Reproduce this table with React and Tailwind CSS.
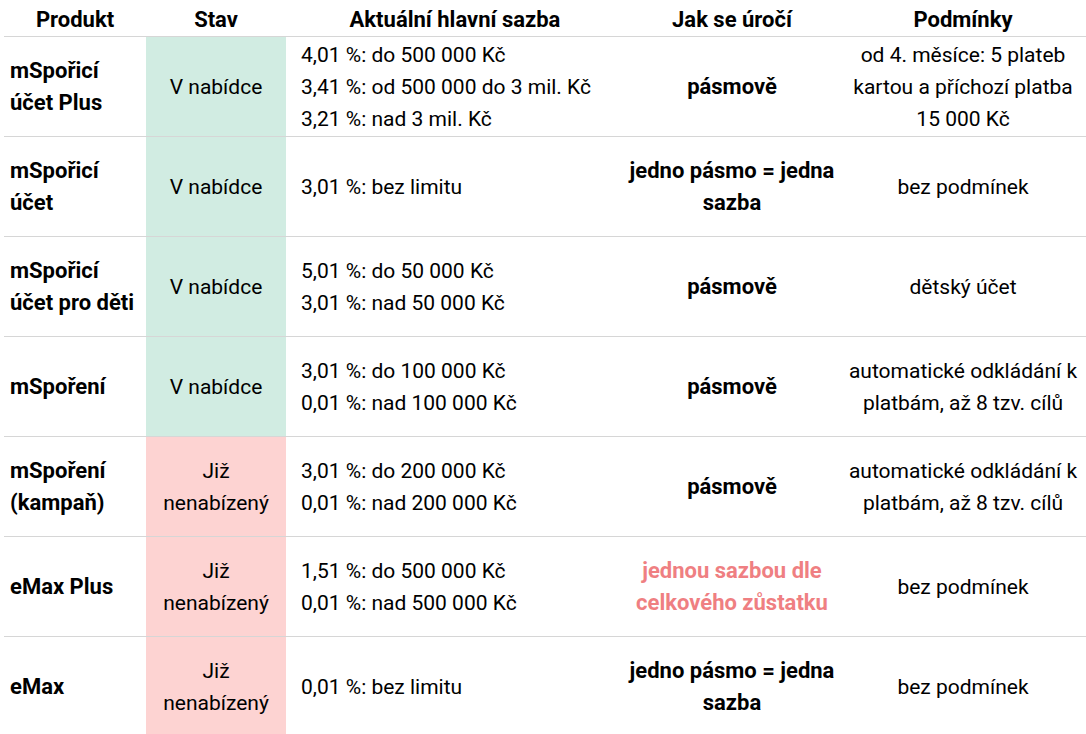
import React from "react";

const rows = [
  {
    name: ["mSpořicí", "účet Plus"],
    active: true,
    rates: ["4,01 %: do 500 000 Kč", "3,41 %: od 500 000 do 3 mil. Kč", "3,21 %: nad 3 mil. Kč"],
    how: ["pásmově"],
    cond: ["od 4. měsíce: 5 plateb", "kartou a příchozí platba", "15 000 Kč"],
  },
  {
    name: ["mSpořicí", "účet"],
    active: true,
    rates: ["3,01 %: bez limitu"],
    how: ["jedno pásmo = jedna", "sazba"],
    cond: ["bez podmínek"],
  },
  {
    name: ["mSpořicí", "účet pro děti"],
    active: true,
    rates: ["5,01 %: do 50 000 Kč", "3,01 %: nad 50 000 Kč"],
    how: ["pásmově"],
    cond: ["dětský účet"],
  },
  {
    name: ["mSpoření"],
    active: true,
    rates: ["3,01 %: do 100 000 Kč", "0,01 %: nad 100 000 Kč"],
    how: ["pásmově"],
    cond: ["automatické odkládání k", "platbám, až 8 tzv. cílů"],
  },
  {
    name: ["mSpoření", "(kampaň)"],
    active: false,
    rates: ["3,01 %: do 200 000 Kč", "0,01 %: nad 200 000 Kč"],
    how: ["pásmově"],
    cond: ["automatické odkládání k", "platbám, až 8 tzv. cílů"],
  },
  {
    name: ["eMax Plus"],
    active: false,
    rates: ["1,51 %: do 500 000 Kč", "0,01 %: nad 500 000 Kč"],
    how: ["jednou sazbou dle", "celkového zůstatku"],
    pink: true,
    cond: ["bez podmínek"],
  },
  {
    name: ["eMax"],
    active: false,
    rates: ["0,01 %: bez limitu"],
    how: ["jedno pásmo = jedna", "sazba"],
    cond: ["bez podmínek"],
  },
];

function Lines({ items }) {
  return (
    <>
      {items.map((t, i) => (
        <div key={i} className="whitespace-nowrap">{t}</div>
      ))}
    </>
  );
}

const head = "h-[37px] pt-[3px] border-b border-[#d6d6d6] flex items-center justify-center font-bold text-[22px]";

export default function App() {
  return (
    <div
      className="w-[1086px] h-[734px] overflow-hidden bg-white text-black text-[21px] leading-[32px]"
      style={{ fontFamily: "Roboto, 'Liberation Sans', sans-serif" }}
    >
      <div className="ml-[4px] grid grid-cols-[142px_140px_338px_216px_246px]">
        <div className={head}>Produkt</div>
        <div className={head}>Stav</div>
        <div className={head}>Aktuální hlavní sazba</div>
        <div className={head}>Jak se úročí</div>
        <div className={head}>Podmínky</div>

        {rows.map((r, i) => (
          <React.Fragment key={i}>
            <div className="h-[100px] border-b border-[#d6d6d6] flex flex-col justify-center pl-[6px] font-bold text-[22px]">
              <Lines items={r.name} />
            </div>
            <div
              className={
                "h-[100px] border-b border-[#d6d6d6] flex flex-col justify-center items-center text-center " +
                (r.active ? "bg-[#d1ece2]" : "bg-[#fdd3d2]")
              }
            >
              {r.active ? <div>V nabídce</div> : <Lines items={["Již", "nenabízený"]} />}
            </div>
            <div className="h-[100px] border-b border-[#d6d6d6] flex flex-col justify-center pl-[15px]">
              <Lines items={r.rates} />
            </div>
            <div
              className={
                "h-[100px] border-b border-[#d6d6d6] flex flex-col justify-center items-center text-center font-bold text-[22px] " +
                (r.pink ? "text-[#ef7f82]" : "")
              }
            >
              <Lines items={r.how} />
            </div>
            <div className="h-[100px] border-b border-[#d6d6d6] flex flex-col justify-center items-center text-center">
              <Lines items={r.cond} />
            </div>
          </React.Fragment>
        ))}
      </div>
    </div>
  );
}
